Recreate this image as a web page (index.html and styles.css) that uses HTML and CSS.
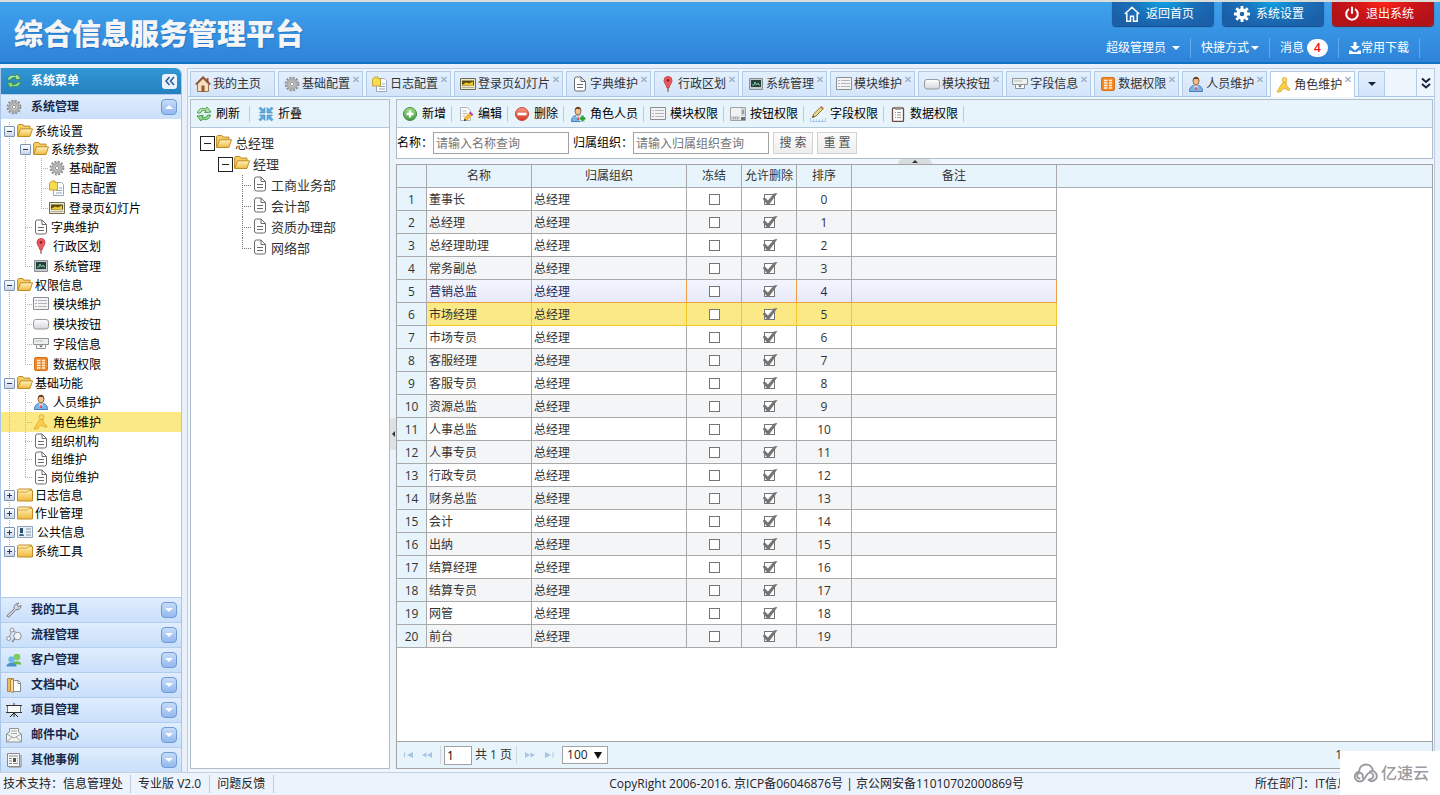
FILE: index.html
```html
<!DOCTYPE html>
<html lang="zh-CN">
<head>
<meta charset="utf-8">
<title>综合信息服务管理平台</title>
<link rel="stylesheet" href="styles.css">
</head>
<body>
<svg class="defs" aria-hidden="true">
<defs>
<linearGradient id="gFolder" x1="0" y1="0" x2="0" y2="1"><stop offset="0" stop-color="#fff3bf"/><stop offset="1" stop-color="#f0b93c"/></linearGradient>
<linearGradient id="gGreen" x1="0" y1="0" x2="0" y2="1"><stop offset="0" stop-color="#a5e08c"/><stop offset="1" stop-color="#3f9a3c"/></linearGradient>
<linearGradient id="gRed" x1="0" y1="0" x2="0" y2="1"><stop offset="0" stop-color="#f59a84"/><stop offset="1" stop-color="#d23a26"/></linearGradient>
<linearGradient id="gGray" x1="0" y1="0" x2="0" y2="1"><stop offset="0" stop-color="#ffffff"/><stop offset="1" stop-color="#d4d6da"/></linearGradient>
</defs>
<symbol id="folder-open" viewBox="0 0 16 16"><path d="M.6 13.400V2.500l1.200-1h4l1.200 1.600h6v3.300" fill="#f6cd62" stroke="#c08c26"/><path d="M.7 13.500 3.600 5.800h11.900l-2.600 7.700z" fill="url(#gFolder)" stroke="#c08c26"/></symbol>
<symbol id="folder" viewBox="0 0 16 16"><path d="M.5 14v-11l1-1h13v1.500h1V14z" fill="url(#gFolder)" stroke="#c08c26"/><path d="M1 5h9l1.500-1.500H15" fill="none" stroke="#d9a63c"/></symbol>
<symbol id="doc" viewBox="0 0 16 16"><path d="M2.500 3a2 2 0 0 1 2-2h4.500l4.500 4.500V13a2 2 0 0 1-2 2h-7a2 2 0 0 1-2-2z" fill="#fff" stroke="#6b6b6b"/><path d="M9 1v4.500h4.500M5 8.500h6M5 11.500h6" fill="none" stroke="#6b6b6b"/></symbol>
<symbol id="gear" viewBox="0 0 16 16"><circle cx="8" cy="8" r="6.500" fill="none" stroke="#8c8c8c" stroke-width="1.800" stroke-dasharray="2 1.400"/><circle cx="8" cy="8" r="4" fill="#ededed" stroke="#b0b0b0" stroke-width="2.800"/><circle cx="8" cy="8" r="5.400" fill="none" stroke="#8f8f8f" stroke-width=".6"/><circle cx="8" cy="8" r="1.800" fill="#fff" stroke="#888"/></symbol>
<symbol id="refresh" viewBox="0 0 16 16"><path d="M1.500 7C2 3 6 1.200 9.700 3L11 1l4 5-6.300.7L10 4.800C6.800 4 4.700 5 4.500 7z" fill="#b4e6aa" stroke="#2f8a3a" stroke-width=".8"/><path d="M14.500 9c-.5 4-4.500 5.800-8.200 4L5 15l-4-5 6.300-.7L6 11.200c3.200.8 5.300-.2 5.500-2.200z" fill="#94d888" stroke="#2f8a3a" stroke-width=".8"/></symbol>
<symbol id="house" viewBox="0 0 16 16"><path d="M11.500 2h2v4h-2z" fill="#c0492c"/><path d="M2.500 8 8 2.500 13.500 8v7.500h-11z" fill="#f5dfc0" stroke="#9c7350"/><path d="M.7 8.500 8 1.200l7.300 7.300" fill="none" stroke="#8a4b2c" stroke-width="1.700"/><path d="M6.500 9.500h3v6h-3z" fill="#9a5730"/></symbol>
<symbol id="notes" viewBox="0 0 16 16"><path d="M4.500 2.500h8l2 2v11h-10z" fill="#fff" stroke="#9aa9bb"/><path d="M10 8h3M7 10.500h6M7 13h6" stroke="#8aa4c8"/><path d="M.5 3 3 1h3v1.500h2.500V10H.5z" fill="#f6dc4e" stroke="#c2a338"/></symbol>
<symbol id="slide" viewBox="0 0 16 16"><path d="M.5 2.500h15v11H.5z" fill="#ece8c8" stroke="#6c6c5a"/><path d="M2 4.500h12v5H2z" fill="#5b4c12"/><path d="m2 9 4-2.500 3 1 4-2v4z" fill="#f0ca2a"/><path d="M2.500 11.500h11" stroke="#777" stroke-dasharray="1 1"/></symbol>
<symbol id="pin" viewBox="0 0 16 16"><path d="M7 8.500h2L8.500 16h-1z" fill="#9a5055"/><path d="M8 .5a4 4 0 0 1 4 4c0 2.500-2.300 4-2.800 7H6.800C6.300 8.500 4 7 4 4.500a4 4 0 0 1 4-4z" fill="#ea5a5e" stroke="#c8444a"/><circle cx="8" cy="4.300" r="1.400" fill="#8d1f27"/></symbol>
<symbol id="monitor" viewBox="0 0 16 16"><path d="M1.500 2.500h13v11h-13z" fill="#c5cbce" stroke="#8a9196"/><path d="M3 4h10v7H3z" fill="#24413c"/><path d="M4 9h2l1-3 1.500 3L10 7l1 2h1" fill="none" stroke="#83c8a8"/></symbol>
<symbol id="list" viewBox="0 0 16 16"><path d="M.5 1.500h15v12H.5z" fill="#f4f4f4" stroke="#8a8e93"/><path d="M2 4.500h2M5 4.500h9M2 7.500h2M5 7.500h9M2 10.500h2M5 10.500h9" stroke="#b1b5bb"/></symbol>
<symbol id="btn" viewBox="0 0 16 16"><rect x=".5" y="3.500" width="15" height="9.500" rx="2.500" fill="url(#gGray)" stroke="#9b9b9b"/></symbol>
<symbol id="field" viewBox="0 0 16 16"><path d="M.5 2.500h15v6H.5z" fill="#eef0f0" stroke="#8f9499"/><path d="M2 5h8" stroke="#b7bbc0"/><path d="M3.500 8.500h9v4h-9z" fill="#fff" stroke="#8f9499"/><path d="M6 9.500h4l-2 2z" fill="#555"/></symbol>
<symbol id="data" viewBox="0 0 16 16"><rect x="1.500" y="1.500" width="13" height="13" rx="1.500" fill="#ef8a2c" stroke="#d8701a"/><path d="M4 4.500h3.500M4 7h3.500M4 9.500h3.500M4 12h3.500M9 4.500h3M9 7h3M9 9.500h3M9 12h3" stroke="#fff3e0" stroke-width="1.500"/></symbol>
<symbol id="person" viewBox="0 0 16 16"><path d="M1.500 15.500c0-4 2-5.500 4-6h5c2 .5 4 2 4 6z" fill="#7db4ea" stroke="#4a7cb4"/><path d="m6 9.500 2 5 2-5z" fill="#fff"/><path d="M7.600 10.500h.9l.4 3.500h-1.800z" fill="#c33"/><ellipse cx="8" cy="5" rx="3" ry="3.900" fill="#f0bf90" stroke="#7d4f28" stroke-width=".8"/><path d="M4.800 5C4.500-.5 11.500-.5 11.200 5L10 3H6z" fill="#64401f"/></symbol>
<symbol id="role" viewBox="0 0 16 16"><circle cx="8.500" cy="3" r="2.400" fill="#fbdc62" stroke="#dca63a" stroke-width=".8"/><path d="M6.800 5.500h3.400l.8 4 3 2.500-1 1.700-4-2.200-2.500.5-2 3H1l3-5.500z" fill="#f9cf45" stroke="#dca63a" stroke-width=".8"/></symbol>
<symbol id="card" viewBox="0 0 16 16"><path d="M.5 2.500h15v11H.5z" fill="#e9f0f6" stroke="#8da5ba"/><path d="M2 12c0-3 5-3 5 0z" fill="#366996"/><path d="M3 4h3v5H3z" fill="#24506f"/><path d="M9 5h5M9 8h5M9 11h5" stroke="#8096a8"/></symbol>
<symbol id="wrench" viewBox="0 0 16 16"><path d="M.8 13.800 8.200 6.700C7.500 4 9.500 1 12.800 1.200L11 3.200l1.700 1.700 2.200-1.700c.4 3-2.200 5-4.900 4.400l-7.200 7.700z" fill="#d3d5d9" stroke="#777b82"/></symbol>
<symbol id="flow" viewBox="0 0 16 16"><path d="m3 11 3-8 5 3" fill="none" stroke="#999"/><g fill="#eff2f6" stroke="#8f949b"><circle cx="2.700" cy="11.500" r="2"/><circle cx="6" cy="3" r="2"/><circle cx="11.500" cy="9" r="3.800"/></g><path d="m9 11.500-3 3.500" stroke="#858a92" stroke-width="1.500"/></symbol>
<symbol id="people" viewBox="0 0 16 16"><path d="M6 12.500C6 8 15.500 8 15.500 12.500z" fill="#6cbc48"/><circle cx="11" cy="5" r="3.300" fill="#7fca58"/><path d="M.5 14.500c0-5 10-5 10 0z" fill="#4590cf"/><circle cx="5.500" cy="7.500" r="3.200" fill="#6eb9e6"/></symbol>
<symbol id="book" viewBox="0 0 16 16"><path d="M1.500 1.500h5v13h-5z" fill="#edbc68" stroke="#b8843a"/><path d="m4.500 3 3-1.500v14l-3-1z" fill="#fadc9c" stroke="#b8843a"/><path d="M7.500 3.500h5l2 2v9h-7z" fill="#fff" stroke="#828a94"/><path d="M12 3.500v3h2.500" fill="none" stroke="#828a94"/></symbol>
<symbol id="board" viewBox="0 0 16 16"><path d="M1.500 3.500h13v7h-13z" fill="#f7f7f7" stroke="#777"/><path d="M0 3.500h16M8 1v2M0 10.500h16" stroke="#333"/><path d="M8 11v4m0-4-4 4m4-4 4 4" stroke="#222" fill="none"/></symbol>
<symbol id="mail" viewBox="0 0 16 16"><path d="m.5 7 3-2V1.500h9V5l3 2v8H.5z" fill="#f2f4f2" stroke="#8d9593"/><path d="M5 4h6M5 6.500h6M.5 7 8 11l7.500-4M.5 15 6 10M15.500 15 10 10" stroke="#9ea8a4" fill="none"/></symbol>
<symbol id="news" viewBox="0 0 16 16"><path d="M1.500 1.500h12v13h-12z" fill="#f8f8f8" stroke="#8a8a8a"/><path d="M3 4h9M3 6.500h3M3 9h3M3 11.500h3M11 6.500h1M11 9h1M7 11.500h5M15 3v12H3" stroke="#888" fill="none"/><path d="M7 6h3v4H7z" fill="#555"/></symbol>
<symbol id="collapse" viewBox="0 0 16 16"><g fill="#5fabe0" stroke="#2f7fbd" stroke-width=".5"><path d="M7 7H1.500l2-2L1 2.500 2.500 1 5 3.500l2-2zM9 7V1.500l2 2L13.500 1 15 2.500 12.500 5l2 2zM7 9v5.500l-2-2L2.500 15 1 13.500 3.500 11l-2-2zM9 9h5.500l-2 2 2.500 2.500-1.500 1.500-2.500-2.500-2 2z"/></g></symbol>
<symbol id="add" viewBox="0 0 16 16"><circle cx="8" cy="8" r="6.500" fill="url(#gGreen)" stroke="#3f8d3c"/><path d="M8 4.500v7M4.500 8h7" stroke="#fff" stroke-width="2.400"/></symbol>
<symbol id="del" viewBox="0 0 16 16"><circle cx="8" cy="8" r="6.500" fill="url(#gRed)" stroke="#c84a38"/><path d="M3.500 8h9" stroke="#fff" stroke-width="2.600"/></symbol>
<symbol id="edit" viewBox="0 0 16 16"><path d="M2.500 1.500h7l3 3v10h-10z" fill="#fafafa" stroke="#b0b4bb"/><path d="M4.500 5h4M4.500 7.500h5M4.500 10h3" stroke="#b7bcc5"/><path d="m6 14.500.7-3.200 5-4.800 2.800 2.800-5 4.800z" fill="#f4b52c"/><path d="m11 7 1.300-1.500 3 3L14 10z" fill="#a745b3"/><path d="m6 15 .5-2.500 2 2z" fill="#333"/></symbol>
<symbol id="person-add" viewBox="0 0 16 16"><use href="#person"/><path d="M12.500 9v7M9 12.500h7" stroke="#fff" stroke-width="4"/><path d="M12.500 9.500v6M9.500 12.500h6" stroke="#2ca234" stroke-width="2.400"/></symbol>
<symbol id="keys" viewBox="0 0 16 16"><path d="M.5 1.500h15v13H.5z" fill="#f2f2f2" stroke="#a2a2a2"/><path d="M1 10h9v4H1zM11 2h4v8h-4z" fill="#d1d4d9"/><path d="M11 11h4v3h-4z" fill="#6b6f78"/><path d="M3 12h1m1 0h1m1 0h1M13 4v4" stroke="#666"/></symbol>
<symbol id="pencil" viewBox="0 0 16 16"><path d="m2.500 11.500 1-3.500L11 .8l2.200 2L6 10z" fill="#e9d78a" stroke="#8f7a36"/><path d="m2.500 11.500.6-2 1.400 1.400z" fill="#333"/><path d="m10.500 1.300 1.200-1 2 2-1.200 1z" fill="#c85b50"/><path d="M.5 12v3.500h15V12M3.500 13.500v2m3-2v2m3-2v2m3-2v2" fill="none" stroke="#a9c8ea"/></symbol>
<symbol id="clip" viewBox="0 0 16 16"><rect x="2.500" y="2" width="11" height="13.500" rx="1" fill="#fff" stroke="#6b4a42" stroke-width="1.300"/><path d="M5 .8h6v3H5z" fill="#9b8f8a"/><path d="M5 6.500h6M5 9h6M5 11.500h6" stroke="#9a9a9a" stroke-dasharray="1 1 9"/></symbol>
</svg>

<header class="top">
  <h1 class="brand">综合信息服务管理平台</h1>
  <div class="top-right">
    <div class="top-buttons">
      <button class="top-btn"><svg class="i16" viewBox="0 0 16 16"><path d="M.8 8 8 1.200 15.200 8M2.800 7v8.200h3.700v-5h3v5h3.700V7" fill="none" stroke="#fff" stroke-width="1.500"/></svg>返回首页</button>
      <button class="top-btn"><svg class="i16" viewBox="0 0 16 16"><circle cx="8" cy="8" r="4" fill="none" stroke="#fff" stroke-width="3.400"/><path d="M8 0v3M8 13v3M0 8h3M13 8h3M2.300 2.300l2 2M11.700 11.700l2 2M13.700 2.300l-2 2M4.300 11.700l-2 2" stroke="#fff" stroke-width="2.800"/></svg>系统设置</button>
      <button class="top-btn exit"><svg class="i16" viewBox="0 0 16 16"><path d="M5 3a5.800 5.800 0 1 0 6 0M8 .8v7" fill="none" stroke="#fff" stroke-width="2"/></svg>退出系统</button>
    </div>
    <nav class="top-links">
      <a href="#">超级管理员<i class="caret wide"></i></a>
      <a href="#">快捷方式<i class="caret"></i></a>
      <a href="#">消息<span class="badge">4</span></a>
      <a href="#"><svg class="i12" viewBox="0 0 12 12"><path d="M4.500 0h3v4H11L6 8.500 1 4h3.500zM0 8.500h2.500L4 10h4l1.500-1.500H12V12H0z" fill="#fff"/></svg>常用下载</a>
    </nav>
  </div>
</header>

<div class="body">
  <aside class="side">
    <div class="side-title"><svg class="i16"><use href="#refresh"/></svg><span>系统菜单</span><button class="fold" aria-label="收起"><svg class="i12" viewBox="0 0 12 12"><path d="M5.500 2 2 6l3.500 4M10 2 6.500 6l3.500 4" fill="none" stroke="#2a5c9a" stroke-width="1.500"/></svg></button></div>
    <div class="acc"><svg class="i16"><use href="#gear"/></svg><span>系统管理</span><button class="tog up" aria-label="收起系统管理"></button></div>
    <ul class="tree">
      <li><b class="x v"></b><svg class="i16"><use href="#folder-open"/></svg><a href="#">系统设置</a></li>
      <li><b class="v"></b><b class="x v"></b><svg class="i16"><use href="#folder-open"/></svg><a href="#">系统参数</a></li>
      <li class="c"><b class="v"></b><b class="v"></b><b class="t"></b><svg class="i16"><use href="#gear"/></svg><a href="#">基础配置</a></li>
      <li class="c"><b class="v"></b><b class="v"></b><b class="t"></b><svg class="i16"><use href="#notes"/></svg><a href="#">日志配置</a></li>
      <li class="c"><b class="v"></b><b class="v"></b><b class="l"></b><svg class="i16"><use href="#slide"/></svg><a href="#">登录页幻灯片</a></li>
      <li><b class="v"></b><b class="t"></b><svg class="i16"><use href="#doc"/></svg><a href="#">字典维护</a></li>
      <li class="c"><b class="v"></b><b class="t"></b><svg class="i16"><use href="#pin"/></svg><a href="#">行政区划</a></li>
      <li class="c"><b class="v"></b><b class="l"></b><svg class="i16"><use href="#monitor"/></svg><a href="#">系统管理</a></li>
      <li><b class="x v"></b><svg class="i16"><use href="#folder-open"/></svg><a href="#">权限信息</a></li>
      <li class="c"><b class="v"></b><b class="t"></b><svg class="i16"><use href="#list"/></svg><a href="#">模块维护</a></li>
      <li class="c"><b class="v"></b><b class="t"></b><svg class="i16"><use href="#btn"/></svg><a href="#">模块按钮</a></li>
      <li class="c"><b class="v"></b><b class="t"></b><svg class="i16"><use href="#field"/></svg><a href="#">字段信息</a></li>
      <li class="c"><b class="v"></b><b class="l"></b><svg class="i16"><use href="#data"/></svg><a href="#">数据权限</a></li>
      <li><b class="x v"></b><svg class="i16"><use href="#folder-open"/></svg><a href="#">基础功能</a></li>
      <li class="c"><b class="v"></b><b class="t"></b><svg class="i16"><use href="#person"/></svg><a href="#">人员维护</a></li>
      <li class="c on"><b class="v"></b><b class="t"></b><svg class="i16"><use href="#role"/></svg><a href="#">角色维护</a></li>
      <li><b class="v"></b><b class="t"></b><svg class="i16"><use href="#doc"/></svg><a href="#">组织机构</a></li>
      <li><b class="v"></b><b class="t"></b><svg class="i16"><use href="#doc"/></svg><a href="#">组维护</a></li>
      <li><b class="v"></b><b class="l"></b><svg class="i16"><use href="#doc"/></svg><a href="#">岗位维护</a></li>
      <li><b class="x plus v"></b><svg class="i16"><use href="#folder"/></svg><a href="#">日志信息</a></li>
      <li><b class="x plus v"></b><svg class="i16"><use href="#folder"/></svg><a href="#">作业管理</a></li>
      <li class="c"><b class="x plus v"></b><svg class="i16"><use href="#card"/></svg><a href="#">公共信息</a></li>
      <li><b class="x plus l"></b><svg class="i16"><use href="#folder"/></svg><a href="#">系统工具</a></li>
    </ul>
    <div class="acc"><svg class="i16"><use href="#wrench"/></svg><span>我的工具</span><button class="tog" aria-label="展开我的工具"></button></div>
    <div class="acc"><svg class="i16"><use href="#flow"/></svg><span>流程管理</span><button class="tog" aria-label="展开流程管理"></button></div>
    <div class="acc"><svg class="i16"><use href="#people"/></svg><span>客户管理</span><button class="tog" aria-label="展开客户管理"></button></div>
    <div class="acc"><svg class="i16"><use href="#book"/></svg><span>文档中心</span><button class="tog" aria-label="展开文档中心"></button></div>
    <div class="acc"><svg class="i16"><use href="#board"/></svg><span>项目管理</span><button class="tog" aria-label="展开项目管理"></button></div>
    <div class="acc"><svg class="i16"><use href="#mail"/></svg><span>邮件中心</span><button class="tog" aria-label="展开邮件中心"></button></div>
    <div class="acc"><svg class="i16"><use href="#news"/></svg><span>其他事例</span><button class="tog" aria-label="展开其他事例"></button></div>
  </aside>

  <main class="main">
    <div class="tabs">
      <a class="tab" href="#"><svg class="i16"><use href="#house"/></svg>我的主页</a>
      <a class="tab close" href="#"><svg class="i16"><use href="#gear"/></svg>基础配置</a>
      <a class="tab close" href="#"><svg class="i16"><use href="#notes"/></svg>日志配置</a>
      <a class="tab close" href="#"><svg class="i16"><use href="#slide"/></svg>登录页幻灯片</a>
      <a class="tab close" href="#"><svg class="i16"><use href="#doc"/></svg>字典维护</a>
      <a class="tab close" href="#"><svg class="i16"><use href="#pin"/></svg>行政区划</a>
      <a class="tab close" href="#"><svg class="i16"><use href="#monitor"/></svg>系统管理</a>
      <a class="tab close" href="#"><svg class="i16"><use href="#list"/></svg>模块维护</a>
      <a class="tab close" href="#"><svg class="i16"><use href="#btn"/></svg>模块按钮</a>
      <a class="tab close" href="#"><svg class="i16"><use href="#field"/></svg>字段信息</a>
      <a class="tab close" href="#"><svg class="i16"><use href="#data"/></svg>数据权限</a>
      <a class="tab close" href="#"><svg class="i16"><use href="#person"/></svg>人员维护</a>
      <a class="tab close current" href="#"><svg class="i16"><use href="#role"/></svg>角色维护</a>
      <button class="tab menu" aria-label="标签列表"><i class="caret dark"></i></button>
      <button class="more" aria-label="更多"><svg class="i12" viewBox="0 0 12 12"><path d="m2 1.500 4 3.500 4-3.500M2 7l4 3.500L10 7" fill="none" stroke="#15233c" stroke-width="2"/></svg></button>
    </div>
    <div class="work">
      <section class="orgs">
        <div class="bar">
          <button class="tool"><svg class="i16"><use href="#refresh"/></svg>刷新</button>
          <button class="tool last"><svg class="i16"><use href="#collapse"/></svg>折叠</button>
        </div>
        <ul class="org-tree">
          <li><b class="x"></b><svg class="i16"><use href="#folder-open"/></svg><a href="#">总经理</a></li>
          <li><b></b><b class="x"></b><svg class="i16"><use href="#folder-open"/></svg><a href="#">经理</a></li>
          <li><b></b><b></b><b class="t"></b><svg class="i16"><use href="#doc"/></svg><a href="#">工商业务部</a></li>
          <li><b></b><b></b><b class="t"></b><svg class="i16"><use href="#doc"/></svg><a href="#">会计部</a></li>
          <li><b></b><b></b><b class="t"></b><svg class="i16"><use href="#doc"/></svg><a href="#">资质办理部</a></li>
          <li><b></b><b></b><b class="l"></b><svg class="i16"><use href="#doc"/></svg><a href="#">网络部</a></li>
        </ul>
      </section>
      <div class="split"><button class="grip" aria-label="收起左侧"></button></div>
      <section class="content">
        <div class="query">
          <div class="bar">
            <button class="tool"><svg class="i16"><use href="#add"/></svg>新增</button>
            <button class="tool"><svg class="i16"><use href="#edit"/></svg>编辑</button>
            <button class="tool"><svg class="i16"><use href="#del"/></svg>删除</button>
            <button class="tool"><svg class="i16"><use href="#person-add"/></svg>角色人员</button>
            <button class="tool"><svg class="i16"><use href="#list"/></svg>模块权限</button>
            <button class="tool"><svg class="i16"><use href="#keys"/></svg>按钮权限</button>
            <button class="tool"><svg class="i16"><use href="#pencil"/></svg>字段权限</button>
            <button class="tool"><svg class="i16"><use href="#clip"/></svg>数据权限</button>
          </div>
          <form class="search">
            <label for="q-name">名称：</label><input id="q-name" type="text" placeholder="请输入名称查询">
            <label for="q-org">归属组织：</label><input id="q-org" type="text" placeholder="请输入归属组织查询">
            <button type="button">搜 索</button>
            <button type="button">重 置</button>
          </form>
        </div>
        <div class="hsplit"><button class="hgrip" aria-label="收起查询"></button></div>
        <div class="grid">
          <div class="grid-head">
          <table>
            <colgroup><col class="w-no"><col class="w-name"><col class="w-org"><col class="w-s"><col class="w-s"><col class="w-s"><col class="w-note"></colgroup>
            <thead><tr><th></th><th>名称</th><th>归属组织</th><th>冻结</th><th>允许删除</th><th>排序</th><th>备注</th></tr></thead>
            <tbody>
            <tr><th>1</th><td>董事长</td><td>总经理</td><td><input type="checkbox" aria-label="冻结"></td><td><input type="checkbox" aria-label="允许删除" checked></td><td>0</td><td></td></tr>
            <tr><th>2</th><td>总经理</td><td>总经理</td><td><input type="checkbox" aria-label="冻结"></td><td><input type="checkbox" aria-label="允许删除" checked></td><td>1</td><td></td></tr>
            <tr><th>3</th><td>总经理助理</td><td>总经理</td><td><input type="checkbox" aria-label="冻结"></td><td><input type="checkbox" aria-label="允许删除" checked></td><td>2</td><td></td></tr>
            <tr><th>4</th><td>常务副总</td><td>总经理</td><td><input type="checkbox" aria-label="冻结"></td><td><input type="checkbox" aria-label="允许删除" checked></td><td>3</td><td></td></tr>
            <tr class="hover"><th>5</th><td>营销总监</td><td>总经理</td><td><input type="checkbox" aria-label="冻结"></td><td><input type="checkbox" aria-label="允许删除" checked></td><td>4</td><td></td></tr>
            <tr class="sel"><th>6</th><td>市场经理</td><td>总经理</td><td><input type="checkbox" aria-label="冻结"></td><td><input type="checkbox" aria-label="允许删除" checked></td><td>5</td><td></td></tr>
            <tr><th>7</th><td>市场专员</td><td>总经理</td><td><input type="checkbox" aria-label="冻结"></td><td><input type="checkbox" aria-label="允许删除" checked></td><td>6</td><td></td></tr>
            <tr><th>8</th><td>客服经理</td><td>总经理</td><td><input type="checkbox" aria-label="冻结"></td><td><input type="checkbox" aria-label="允许删除" checked></td><td>7</td><td></td></tr>
            <tr><th>9</th><td>客服专员</td><td>总经理</td><td><input type="checkbox" aria-label="冻结"></td><td><input type="checkbox" aria-label="允许删除" checked></td><td>8</td><td></td></tr>
            <tr><th>10</th><td>资源总监</td><td>总经理</td><td><input type="checkbox" aria-label="冻结"></td><td><input type="checkbox" aria-label="允许删除" checked></td><td>9</td><td></td></tr>
            <tr><th>11</th><td>人事总监</td><td>总经理</td><td><input type="checkbox" aria-label="冻结"></td><td><input type="checkbox" aria-label="允许删除" checked></td><td>10</td><td></td></tr>
            <tr><th>12</th><td>人事专员</td><td>总经理</td><td><input type="checkbox" aria-label="冻结"></td><td><input type="checkbox" aria-label="允许删除" checked></td><td>11</td><td></td></tr>
            <tr><th>13</th><td>行政专员</td><td>总经理</td><td><input type="checkbox" aria-label="冻结"></td><td><input type="checkbox" aria-label="允许删除" checked></td><td>12</td><td></td></tr>
            <tr><th>14</th><td>财务总监</td><td>总经理</td><td><input type="checkbox" aria-label="冻结"></td><td><input type="checkbox" aria-label="允许删除" checked></td><td>13</td><td></td></tr>
            <tr><th>15</th><td>会计</td><td>总经理</td><td><input type="checkbox" aria-label="冻结"></td><td><input type="checkbox" aria-label="允许删除" checked></td><td>14</td><td></td></tr>
            <tr><th>16</th><td>出纳</td><td>总经理</td><td><input type="checkbox" aria-label="冻结"></td><td><input type="checkbox" aria-label="允许删除" checked></td><td>15</td><td></td></tr>
            <tr><th>17</th><td>结算经理</td><td>总经理</td><td><input type="checkbox" aria-label="冻结"></td><td><input type="checkbox" aria-label="允许删除" checked></td><td>16</td><td></td></tr>
            <tr><th>18</th><td>结算专员</td><td>总经理</td><td><input type="checkbox" aria-label="冻结"></td><td><input type="checkbox" aria-label="允许删除" checked></td><td>17</td><td></td></tr>
            <tr><th>19</th><td>网管</td><td>总经理</td><td><input type="checkbox" aria-label="冻结"></td><td><input type="checkbox" aria-label="允许删除" checked></td><td>18</td><td></td></tr>
            <tr><th>20</th><td>前台</td><td>总经理</td><td><input type="checkbox" aria-label="冻结"></td><td><input type="checkbox" aria-label="允许删除" checked></td><td>19</td><td></td></tr>
            </tbody>
          </table>
          </div>
          <div class="pager">
            <button aria-label="首页"><svg class="i12" viewBox="0 0 12 12"><path d="M2 3.500h1v5H2zM11 3v6L5 6z" fill="#a9c3e3"/></svg></button>
            <button aria-label="上一页"><svg class="i12" viewBox="0 0 12 12"><path d="M11 3v6L6 6zM5.500 3.500v5L1 6z" fill="#a9c3e3"/></svg></button>
            <i class="bar-line"></i>
            <input type="text" value="1" aria-label="页码"><span>共 1 页</span>
            <i class="bar-line"></i>
            <button aria-label="下一页"><svg class="i12" viewBox="0 0 12 12"><path d="M1 3v6l5-3zM6.500 3.500v5L11 6z" fill="#a9c3e3"/></svg></button>
            <button aria-label="末页"><svg class="i12" viewBox="0 0 12 12"><path d="M9.500 3.500h1v5h-1zM2 3v6l6-3z" fill="#a9c3e3"/></svg></button>
            <span class="size"><select aria-label="每页条数"><option>100</option></select></span>
            <span class="count">1</span>
          </div>
        </div>
      </section>
    </div>
  </main>
</div>

<footer class="foot">
  <div class="foot-left"><span>技术支持：信息管理处</span><span>专业版 V2.0</span><a href="#">问题反馈</a></div>
  <div class="foot-mid">CopyRight 2006-2016. 京ICP备06046876号 | 京公网安备11010702000869号</div>
  <div class="foot-right">所在部门：IT信息</div>
</footer>

<div class="mark"><svg viewBox="0 0 26 20"><path d="M6 8.500C6.500 4 9.500 1.500 13 1.500s6.500 2.500 7 6.500M6.500 8.500a5 5 0 1 0 4.500 7.800l3.500-5.300a3.200 3.200 0 1 1 2.500 5M17 8.300a5 5 0 1 1-1.500 8.500M11 16.500 9.500 14a2.800 2.800 0 1 0-3 1.500" fill="none" stroke="#999ba0" stroke-width="1.900" stroke-linecap="round"/></svg>亿速云</div>
</body>
</html>
```
FILE: styles.css
```css
* { box-sizing: border-box; }
html, body { height: 100%; }
body {
  margin: 0;
  display: flex;
  flex-direction: column;
  background: #e9f0fa;
  font: 12px/18px "Open Sans", "Noto Sans CJK SC", sans-serif;
  color: #222;
  overflow: hidden;
}
a { color: inherit; text-decoration: none; }
button { border: 0; padding: 0; margin: 0; background: none; font: inherit; color: inherit; cursor: pointer; }
input, select { font: inherit; margin: 0; }
ul { list-style: none; margin: 0; padding: 0; }
.defs { position: absolute; width: 0; height: 0; }
.i16 { width: 16px; height: 16px; flex: none; }
.i12 { width: 12px; height: 12px; flex: none; }

/* header */
.top {
  flex: none;
  height: 64px;
  display: flex;
  justify-content: space-between;
  border-top: 2px solid #dcdcd8;
  border-bottom: 2px solid #0f70c4;
  background:
    linear-gradient(215deg, transparent 0 1180px, rgba(255,255,255,.08) 1240px),
    linear-gradient(#3ea2ec, #2f83d9);
}
.brand {
  margin: 0;
  padding: 8px 0 0 14px;
  font: 900 29px/44px "Noto Sans CJK SC", sans-serif;
  color: #f3f5f7;
  text-shadow: 1px 1px 1px rgba(30,80,150,.4);
}
.top-right { display: flex; flex-direction: column; padding-right: 6px; color: #fff; }
.top-buttons { display: flex; gap: 8px; justify-content: flex-end; }
.top-btn {
  width: 102px;
  height: 24px;
  display: flex;
  align-items: center;
  justify-content: center;
  gap: 6px;
  padding-right: 8px;
  border-radius: 0 0 4px 4px;
  background: radial-gradient(ellipse at 50% 0, #11a0e2 0, #1a6fb8 45%, #1a5fa8 80%);
  box-shadow: 0 1px 1px #134a86;
}
.top-btn.exit { background: radial-gradient(ellipse at 50% 0, #ff2318 0, #cb1418 45%, #b01318 80%); box-shadow: 0 1px 1px #74202a; }
.top-links { display: flex; justify-content: flex-end; padding: 12px 14px 0 0; }
.top-links a { display: flex; align-items: center; height: 20px; padding: 0 10px; border-right: 1px solid #5fabec; }
.caret { width: 0; border: 4px solid transparent; border-top-color: currentColor; border-bottom: 0; margin-left: 2px; }
.caret.wide { margin-left: 6px; }
.caret.dark { margin: 0; color: #15233c; }
.badge { margin-left: 3px; width: 21px; height: 18px; border-radius: 9px; background: #fff; color: #e11; font-weight: 600; text-align: center; }

.body { flex: 1; min-height: 0; display: flex; gap: 5px; padding: 4px 5px 0 0; }

/* left menu */
.side { width: 182px; flex: none; display: flex; flex-direction: column; border: 1px solid #a9c6e8; border-width: 0 1px; border-radius: 0 6px 0 0; background: #fff; }
.side-title, .acc { display: flex; flex: none; align-items: center; gap: 9px; padding: 0 4px 0 5px; font-weight: 700; }
.side-title { height: 26px; color: #fff; background: linear-gradient(#3198d4, #2580c0); border-radius: 0 6px 0 0; }
.side-title span, .acc span { flex: 1; }
.fold { width: 15px; height: 15px; border-radius: 3px; background: #e8f3fd; display: grid; place-items: center; }
.acc { height: 25px; color: #16294a; background: linear-gradient(#e0edfd, #c9dffa); border-top: 1px solid #b4cdee; }
.tog { width: 16px; height: 16px; border: 1px solid #6f9ad6; border-radius: 4px; background: linear-gradient(#c6dcfa, #93b9ee); display: grid; place-items: center; }
.tog::after { content: ""; border: 4px solid transparent; border-top-color: #fff; border-bottom: 0; }
.tog.up::after { border: 4px solid transparent; border-bottom-color: #fff; border-top: 0; }
.tree { flex: 1; min-height: 0; padding-top: 3px; overflow: hidden; color: #000; }
.tree li { display: flex; align-items: center; height: 18px; }
.tree li.c { height: 20px; }
.tree li.on { background: #fbe986; }
.tree a { margin-left: 2px; padding-top: 1px; }
.tree .c a { margin-left: 4px; }
.tree b, .org-tree b { flex: none; align-self: stretch; display: grid; place-items: center; background-repeat: no-repeat; }
.tree b { width: 16px; }
.tree .v { background-image: repeating-linear-gradient(#b4b4b4 0 1px, transparent 1px 2px); background-size: 1px 100%; background-position: 8px 0; }
.tree .t, .tree .l, .org-tree .t, .org-tree .l {
  background-image: repeating-linear-gradient(#b4b4b4 0 1px, transparent 1px 2px), repeating-linear-gradient(90deg, #b4b4b4 0 1px, transparent 1px 2px);
  background-size: 1px 100%, 8px 1px;
  background-position: 8px 0, 8px 50%;
}
.org-tree .t, .org-tree .l {
  background-image: repeating-linear-gradient(#777 0 1px, transparent 1px 2px), repeating-linear-gradient(90deg, #777 0 1px, transparent 1px 2px);
  background-size: 1px 100%, 10px 1px;
}
.tree .l { background-size: 1px 50%, 8px 1px; }
.org-tree .l { background-size: 1px 50%, 10px 1px; }
.x::after {
  content: "";
  width: 9px;
  height: 9px;
  border: 1px solid #7b93b5;
  border-radius: 1px;
  background: linear-gradient(#223a66, #223a66) center / 5px 1px no-repeat, linear-gradient(#fff, #ccd5e2);
}
.plus::after { background: linear-gradient(#223a66, #223a66) center / 5px 1px no-repeat, linear-gradient(#223a66, #223a66) center / 1px 5px no-repeat, linear-gradient(#fff, #ccd5e2); }

/* tab strip */
.main { flex: 1; min-width: 0; display: flex; flex-direction: column; border: 1px solid #b9cde6; border-bottom: 0; background: #f0f6fd; }
.tabs { flex: none; height: 28px; display: flex; align-items: flex-end; gap: 3px; padding-left: 2px; background: #edf6fc; border-bottom: 1px solid #aac6e6; }
.tab {
  position: relative;
  flex: none;
  min-width: 85px;
  height: 25px;
  display: flex;
  align-items: center;
  gap: 2px;
  padding: 0 12px 0 5px;
  border: 1px solid #b3cbea;
  border-bottom: 0;
  background: linear-gradient(#e3effc, #d3e5fb);
  white-space: nowrap;
  color: #333;
}
.tab:first-child { padding-left: 4px; }
.tab.close::after { content: "✕"; position: absolute; right: 2px; top: 0; font: 10px/16px "DejaVu Sans", sans-serif; color: #8ba6bd; }
.tab.current { background: #fff; height: 26px; margin-bottom: -1px; }
.tab.menu { min-width: 27px; width: 27px; padding: 0; justify-content: center; }
.more { width: 18px; height: 27px; margin-left: auto; border-left: 1px solid #b3cbea; display: grid; place-items: center; }

/* work area */
.work { flex: 1; min-height: 0; display: flex; padding: 2px 1px 3px 2px; }
.orgs { flex: none; width: 200px; background: #fff; border: 1px solid #b0bcc8; }
.bar { display: flex; align-items: center; height: 28px; padding-left: 5px; background: #e8f4fb; border-bottom: 1px solid #b3c7da; color: #000; }
.tool { display: flex; align-items: center; gap: 4px; height: 16px; padding-right: 5px; margin-right: 6px; border-right: 1px solid #b5cde0; white-space: nowrap; }
.orgs .tool { padding-right: 9px; margin-right: 8px; }
.orgs .tool.last { border: 0; }
.org-tree { padding: 5px 0 0 7px; font-size: 13px; line-height: 21px; color: #333; }
.org-tree li { display: flex; height: 21px; }
.org-tree .i16 { margin-top: 1px; }
.org-tree b { width: 18px; }
.org-tree a { margin-left: 3px; }
.org-tree .x::after { width: 13px; height: 13px; border-color: #222; border-radius: 0; background: linear-gradient(#222, #222) center / 7px 1px no-repeat #fff; }
.split { flex: none; width: 6px; display: grid; align-items: center; background: #eaf2fa; }
.grip { width: 6px; height: 32px; background: #dde1e6; border-radius: 3px 0 0 3px; display: grid; place-items: center; }
.grip::after { content: ""; border: 3px solid transparent; border-right-color: #333; border-left: 0; }
.content { flex: 1; min-width: 0; display: flex; flex-direction: column; }
.query { flex: none; border: 1px solid #b0bcc8; background: #fff; }
.search { display: flex; align-items: center; height: 30px; color: #000; }
.search input { width: 136px; height: 22px; padding: 0 2px; border: 1px solid #a2a2a2; background: #fff; }
.search input::placeholder { color: #757575; }
.search label + input + label { margin-left: 4px; }
.search button { width: 40px; height: 22px; margin-left: 4px; border: 1px solid #d2d2d2; background: linear-gradient(#fbfbfb, #ededed); color: #555; }
.hsplit { flex: none; height: 5px; display: grid; justify-content: center; }
.hgrip { width: 34px; height: 5px; border-radius: 6px 6px 0 0; background: #d9dcdf; display: grid; place-items: center; }
.hgrip::after { content: ""; border: 3px solid transparent; border-bottom-color: #333; border-top: 0; }

/* data grid */
.grid { flex: 1; min-height: 0; display: flex; flex-direction: column; border: 1px solid #a3a3a3; background: #fff; }
.grid-head { flex: 1; min-height: 0; overflow: hidden; background: linear-gradient(#e8f4fb 0 22px, #a9b1b8 22px 23px, #fff 23px); }
table { border-collapse: separate; border-spacing: 0; table-layout: fixed; width: 660px; color: #333; }
.w-no { width: 30px; }
.w-name { width: 105px; }
.w-org { width: 155px; }
.w-s { width: 55px; }
.w-note { width: 205px; }
th, td { height: 23px; padding: 2px 2px 0; border: 1px solid #a9a9a9; border-width: 0 1px 1px 0; text-align: center; vertical-align: middle; font-weight: 400; line-height: 18px; white-space: nowrap; }
td:nth-child(2), td:nth-child(3) { text-align: left; }
th { background: #e8f4fb; }
thead th { padding: 0; }
tbody tr:nth-child(even) td { background: #f4f5f7; }
tbody tr.hover td { background: linear-gradient(#f3f5fd, #e7e9fa); border-color: #ee9e45; color: #222653; }
tbody tr.sel td { background: #fbe986; border-color: #f2c928; }
td input { appearance: none; display: block; position: relative; width: 11px; height: 11px; margin: 0 auto 1px; border: 1px solid #757575; background: #fff; }
td input:checked::after { content: ""; position: absolute; left: -2px; top: -2px; width: 15px; height: 12px; background: #757575; clip-path: polygon(0 48%, 16% 38%, 36% 62%, 76% 4%, 100% 0, 42% 100%, 34% 100%); }
.pager { flex: none; height: 27px; display: flex; align-items: center; padding-left: 5px; border-top: 1px solid #a3a3a3; background: #e8f4fb; color: #333; }
.pager button { width: 19px; height: 20px; display: grid; place-items: center start; }
.bar-line { width: 2px; height: 18px; border-left: 1px solid #d2d8de; }
.pager input { width: 28px; height: 19px; padding: 0 2px; border: 1px solid #a2a2a2; margin: 0 3px 0 2px; }
.pager .bar-line + button { margin-left: 6px; }
.pager span + .bar-line { margin-left: 4px; }
.size { position: relative; }
.size::after { content: ""; position: absolute; right: 6px; top: 6px; border: 4px solid transparent; border-top: 7px solid #111; border-bottom: 0; }
.size select { appearance: none; display: block; width: 46px; height: 18px; padding: 0 4px; border: 1px solid #a2a2a2; border-radius: 0; background: #fff; color: #222; line-height: 16px; }
.count { margin: 0 90px 0 auto; }

/* footer */
.foot { flex: none; height: 23px; display: flex; align-items: center; border-top: 1px solid #c3d1e2; background: #edf3fd; padding: 0 3px; white-space: nowrap; }
.foot-left { display: flex; }
.foot-left > * { padding: 0 8px 0 7px; border-right: 1px solid #c0cad8; }
.foot-left > :first-child { padding: 0 7px 0 0; }
.foot-mid { flex: 1; padding-left: 104px; text-align: center; }
.foot-right { width: 182px; }
.mark { position: absolute; right: 0; bottom: 0; width: 100px; height: 44px; display: flex; align-items: center; gap: 2px; padding-left: 13px; background: #fff; color: #999ba0; font-size: 16px; font-weight: 500; white-space: nowrap; }
.mark svg { width: 26px; height: 20px; flex: none; }
```
